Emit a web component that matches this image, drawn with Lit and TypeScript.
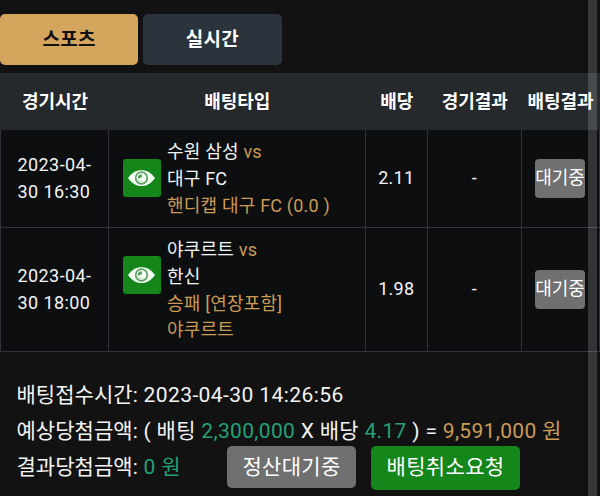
import { LitElement, html, css } from "lit";
import { customElement } from "lit/decorators.js";

interface Bet {
  date: string[];
  teams: string[];
  pick: string[];
  odds: string;
}

const BETS: Bet[] = [
  { date: ["2023-04-", "30 16:30"], teams: ["수원 삼성", "대구 FC"], pick: ["핸디캡 대구 FC (0.0 )"], odds: "2.11" },
  { date: ["2023-04-", "30 18:00"], teams: ["야쿠르트", "한신"], pick: ["승패 [연장포함]", "야쿠르트"], odds: "1.98" },
];

@customElement("app-root")
export class AppRoot extends LitElement {
  static styles = css`
    :host {
      display: block;
      position: relative;
      width: 600px;
      height: 496px;
      overflow: hidden;
      background: #121212;
      color: #f4f4f4;
      font-family: Roboto, "Noto Sans CJK KR", sans-serif;
      font-size: 18px;
      line-height: 26.7px;
      white-space: nowrap;
    }
    .tabs {
      display: flex;
      gap: 5px;
      padding-top: 14px;
      height: 59px;
      box-sizing: border-box;
      margin-bottom: 14px;
    }
    .tab {
      width: 138.3px;
      height: 51px;
      display: flex;
      align-items: center;
      justify-content: center;
      box-sizing: border-box;
      padding-top: 1px;
      border-radius: 5px;
      background: #2b333c;
      color: #fff;
      font-weight: 700;
      font-size: 19px;
      letter-spacing: 0.3px;
    }
    .tab.active {
      background: #d3a55d;
      color: #111;
    }
    .row {
      display: grid;
      grid-template-columns: 108px 256.5px 62.5px 93.5px 78px 1.5px;
      box-sizing: border-box;
    }
    .row > div {
      display: flex;
      align-items: center;
      justify-content: center;
    }
    .head {
      height: 57px;
      padding-top: 1px;
      background: #25292c;
      color: #fff;
      font-weight: 700;
    }
    .head > div {
      padding-left: 2px;
    }
    .bet {
      background: #0c0e10;
      border-bottom: 1px solid #303438;
    }
    .bet > div {
      border-left: 1px solid #303438;
    }
    .bet.r0 { height: 98px; }
    .bet.r1 { height: 124px; }
    .bet > .match {
      justify-content: flex-start;
      padding: 2px 0 0 14px;
      letter-spacing: 0.2px;
    }
    .date { letter-spacing: 0.4px; }
    .odds { letter-spacing: 0.2px; }
    .eye {
      width: 38px;
      height: 38px;
      border-radius: 3px;
      background: #14861a;
      margin-right: 6px;
      margin-bottom: 3px;
    }
    .r1 .eye { margin-bottom: 31px; }
    .gold { color: #cb9b56; }
    .green { color: #26a076; }
    .badge {
      width: 50px;
      height: 39px;
      line-height: 38px;
      border-radius: 4px;
      background: #707070;
      color: #fff;
      text-align: center;
    }
    .summary {
      padding: 25px 0 0 16.5px;
      font-size: 21px;
      line-height: 36px;
    }
    .line {
      display: flex;
      height: 36px;
      white-space: pre;
      letter-spacing: 0.32px;
    }
    .line.time { letter-spacing: 0.42px; }
    .label {
      width: 127px;
      letter-spacing: 0.05px;
    }
    .result { width: 38px; }
    .btn {
      height: 42px;
      line-height: 42px;
      width: 129px;
      border-radius: 5px;
      background: #707070;
      color: #fff;
      text-align: center;
      margin: -3px 0 0 45.5px;
    }
    .btn.cancel {
      width: 149px;
      height: 44px;
      line-height: 43px;
      margin-left: 15px;
      background: #14861a;
    }
    .scrollbar {
      position: absolute;
      top: 0;
      right: 3px;
      width: 9px;
      height: 100%;
      background: rgba(255, 255, 255, 0.16);
    }
  `;

  private eye() {
    return html`<svg class="eye" viewBox="0 0 38 38">
      <path d="M5 19C9 13.500 13 11.200 18.500 11.200S28 13.500 32 19C28 24.500 24 27 18.500 27S9 24.500 5 19Z" fill="#f4fff4" />
      <circle cx="18.500" cy="19" r="5.800" fill="#f4fff4" stroke="#5f9f63" stroke-width="1.700" />
      <path d="M14.800 19.500A3.900 3.900 0 0 1 18.700 15.200V18.600Z" fill="#4d9552" />
      <path d="M14.800 19.200A4 4 0 0 0 20 22.600" fill="none" stroke="#bcdcbe" stroke-width="1" />
    </svg>`;
  }

  render() {
    return html`
      <div class="tabs">
        <div class="tab active">스포츠</div>
        <div class="tab">실시간</div>
      </div>
      <div class="row head">
        <div>경기시간</div><div>배팅타입</div><div>배당</div><div>경기결과</div><div>배팅결과</div>
      </div>
      ${BETS.map(
        (b, i) => html`<div class="row bet r${i}">
          <div class="date"><span>${b.date[0]}<br />${b.date[1]}</span></div>
          <div class="match">
            ${this.eye()}
            <span>
              ${b.teams[0]} <span class="gold">vs</span><br />${b.teams[1]}
              ${b.pick.map((p) => html`<br /><span class="gold">${p}</span>`)}
            </span>
          </div>
          <div class="odds">${b.odds}</div>
          <div>-</div>
          <div><span class="badge">대기중</span></div>
          <div></div>
        </div>`
      )}
      <div class="summary">
        <div class="line time"><span class="label">배팅접수시간:</span>2023-04-30 14:26:56</div>
        <div class="line"><span class="label">예상당첨금액:</span>( 배팅 <span class="green">2,300,000</span> X 배당 <span class="green">4.17</span> ) = <span class="gold">9,591,000 원</span></div>
        <div class="line"><span class="label">결과당첨금액:</span><span class="green result">0 원</span><span class="btn">정산대기중</span><span class="btn cancel">배팅취소요청</span></div>
      </div>
      <div class="scrollbar"></div>
    `;
  }
}
